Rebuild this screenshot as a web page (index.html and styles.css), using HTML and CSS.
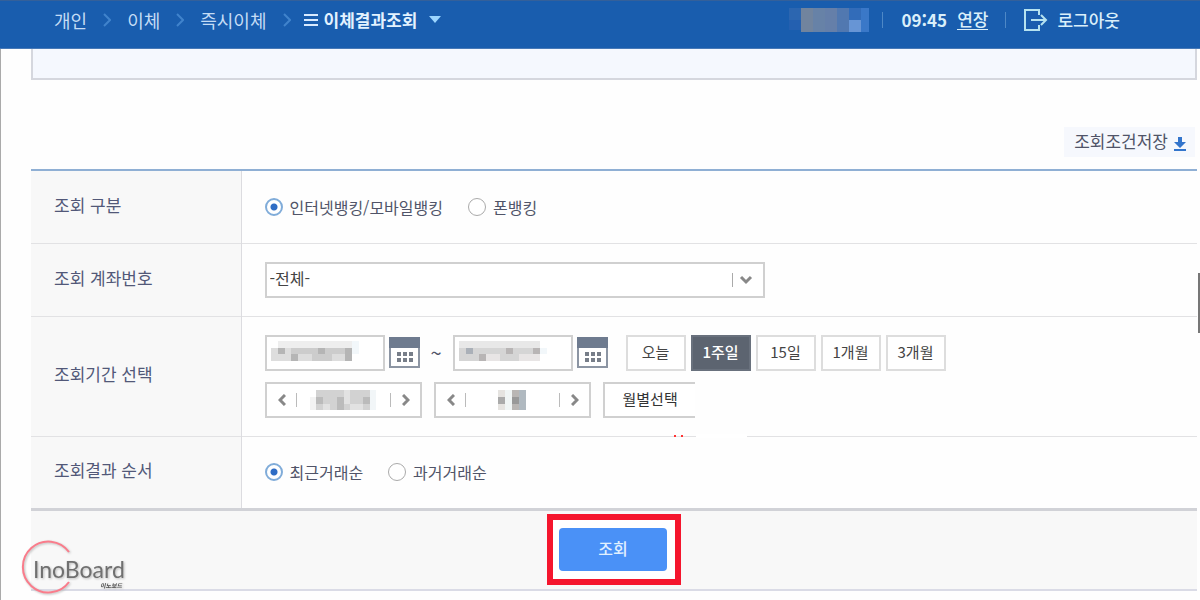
FILE: index.html
```html
<!DOCTYPE html>
<html lang="ko">
<head>
    <meta charset="UTF-8">
    <meta name="viewport" content="width=device-width, initial-scale=1.0">
    <title>이체결과조회</title>
    <link rel="stylesheet" href="styles.css">
</head>
<body>
    <header class="topbar">
        <nav class="breadcrumb">
            <a href="#">개인</a>
            <svg class="sep" width="8" height="14" viewBox="0 0 8 14"><path d="M1 1l6 6-6 6"/></svg>
            <a href="#">이체</a>
            <svg class="sep" width="8" height="14" viewBox="0 0 8 14"><path d="M1 1l6 6-6 6"/></svg>
            <a href="#">즉시이체</a>
            <svg class="sep" width="8" height="14" viewBox="0 0 8 14"><path d="M1 1l6 6-6 6"/></svg>
            <a href="#" class="current">
                <svg width="14" height="14" viewBox="0 0 14 14" fill="#d8eaff"><path d="M0 1h14v2H0zM0 6h14v2H0zM0 11h14v2H0z"/></svg>
                이체결과조회
                <svg class="caret" width="12" height="7" viewBox="0 0 12 7" fill="#9bd5ff"><path d="M0 0h12L6 7z"/></svg>
            </a>
        </nav>
        <div class="session">
            <svg width="80" height="24" viewBox="0 0 80 24">
                <path fill="#2c66b0" d="M0 0h12v12H0z"/><path fill="#2460b0" d="M0 12h12v10H0z"/>
                <path fill="#71849e" d="M12 0h12v24H12z"/><path fill="#6782a7" d="M24 0h12v24H24z"/>
                <path fill="#657fa9" d="M36 0h12v24H36z"/><path fill="#5178b0" d="M48 0h12v24H48z"/>
                <path fill="#326cb9" d="M60 0h12v12H60z"/><path fill="#3a78c8" d="M72 0h8v24h-8z"/>
                <path fill="#6795d5" d="M60 12h12v12H60z"/>
            </svg>
            <span class="bar"></span>
            <span class="time">09:45</span>
            <a href="#" class="extend">연장</a>
            <span class="bar"></span>
            <a href="#" class="logout">
                <svg width="24" height="22" viewBox="0 0 24 22" fill="none" stroke="#b5e2f0" stroke-width="2"><path d="M15 6V1H1v20h14v-5M7 11h15M17 6l5 5-5 5"/></svg>
                로그아웃
            </a>
        </div>
    </header>

    <main class="page">
        <div class="notice"></div>

        <div class="tools">
            <button type="button" class="save">
                조회조건저장
                <svg width="12" height="14" viewBox="0 0 12 14" fill="#3375cc"><path d="M4 0h4v5h4l-6 6-6-6h4zM0 12h12v2H0z"/></svg>
            </button>
        </div>

        <form class="search">
            <table class="conditions">
                <tr>
                    <th scope="row">조회 구분</th>
                    <td>
                        <div class="radios">
                            <label><input type="radio" name="type" checked>인터넷뱅킹/모바일뱅킹</label>
                            <label><input type="radio" name="type">폰뱅킹</label>
                        </div>
                    </td>
                </tr>
                <tr>
                    <th scope="row"><label for="account">조회 계좌번호</label></th>
                    <td>
                        <div class="select-box">
                            <select id="account"><option>-전체-</option></select>
                            <svg width="24" height="16" viewBox="0 0 24 16" fill="none"><path stroke="#aaa" d="M1.500 1v14"/><path stroke="#888" stroke-width="3" d="M10 5l5 5 5-5"/></svg>
                        </div>
                    </td>
                </tr>
                <tr class="period">
                    <th scope="row">조회기간 선택</th>
                    <td>
                        <div class="line">
                            <span class="date">
                                <input type="text" aria-label="시작일">
                                <svg width="88" height="20" viewBox="0 0 88 20">
                                    <path fill="#eee" d="M7 0h74v7H7z"/><path fill="#ddd" d="M0 7h20v13H0z"/>
                                    <path fill="#ccc" d="M20 7h61v13H20z"/><path fill="#b5b5b5" d="M7 7h7v6H7zM20 13h7v7h-7zM74 7h7v13h-7zM47 7h7v6h-7z"/>
                                    <path fill="#ddd" d="M27 13h14v7H27zM61 13h13v7H61z"/><path fill="#f2f7fa" d="M81 0h7v13h-7z"/>
                                </svg>
                            </span>
                            <button type="button" class="calendar" aria-label="시작일 달력">
                                <svg width="31" height="31" viewBox="0 0 31 31"><path fill="#fff" stroke="#8c95a3" stroke-width="2" d="M1 1h29v29H1z"/><path fill="#6e7b8f" d="M0 0h31v11H0z"/><path fill="#777e89" d="M8 15h4v4H8zM14 15h4v4h-4zM20 15h4v4h-4zM8 21h4v4H8zM14 21h4v4h-4zM20 21h4v4h-4z"/></svg>
                            </button>
                            <span class="tilde">~</span>
                            <span class="date">
                                <input type="text" aria-label="종료일">
                                <svg width="88" height="20" viewBox="0 0 88 20">
                                    <path fill="#e8e8e8" d="M0 0h81v7H0z"/><path fill="#d5d5d5" d="M0 7h81v6H0zM0 13h60v7H0z"/>
                                    <path fill="#aab0b8" d="M7 7h7v6H7z"/><path fill="#b8b5b5" d="M20 13h7v7h-7zM47 7h7v6h-7zM74 7h7v6h-7z"/>
                                    <path fill="#e8e5e5" d="M27 13h14v7H27zM60 13h21v7H60z"/><path fill="#f2f7fa" d="M81 7h7v6h-7z"/>
                                </svg>
                            </span>
                            <button type="button" class="calendar" aria-label="종료일 달력">
                                <svg width="31" height="31" viewBox="0 0 31 31"><path fill="#fff" stroke="#8c95a3" stroke-width="2" d="M1 1h29v29H1z"/><path fill="#6e7b8f" d="M0 0h31v11H0z"/><path fill="#777e89" d="M8 15h4v4H8zM14 15h4v4h-4zM20 15h4v4h-4zM8 21h4v4H8zM14 21h4v4h-4zM20 21h4v4h-4z"/></svg>
                            </button>
                            <div class="ranges">
                                <button type="button">오늘</button>
                                <button type="button" class="active">1주일</button>
                                <button type="button">15일</button>
                                <button type="button">1개월</button>
                                <button type="button">3개월</button>
                            </div>
                        </div>
                        <div class="line steppers">
                            <div class="stepper">
                                <button type="button" aria-label="이전 연도"><svg width="8" height="12" viewBox="0 0 8 12"><path d="M7 1L2 6l5 5"/></svg></button>
                                <svg width="66" height="20" viewBox="0 0 66 20">
                                    <path fill="#f3f3f3" d="M0 7h6v13H0z"/><path fill="#d2d2d2" d="M6 0h54v20H6z"/>
                                    <path fill="#bbb" d="M6 7h7v7H6zM27 7h7v13h-7zM53 7h7v7h-7z"/><path fill="#e2e2e2" d="M13 14h7v6h-7zM34 0h6v14h-6zM40 14h13v6H40z"/>
                                    <path fill="#f2f6f8" d="M60 0h6v20h-6z"/>
                                </svg>
                                <button type="button" aria-label="다음 연도"><svg width="8" height="12" viewBox="0 0 8 12"><path d="M1 1l5 5-5 5"/></svg></button>
                            </div>
                            <div class="stepper">
                                <button type="button" aria-label="이전 달"><svg width="8" height="12" viewBox="0 0 8 12"><path d="M7 1L2 6l5 5"/></svg></button>
                                <svg width="28" height="20" viewBox="0 0 28 20">
                                    <path fill="#e5e3e0" d="M0 0h7v20H0z"/><path fill="#aaa" d="M0 7h7v7H0z"/><path fill="#f0f5f5" d="M7 0h7v20H7z"/>
                                    <path fill="#b9b6b4" d="M14 0h7v20h-7z"/><path fill="#b0b9c0" d="M21 0h7v20h-7z"/><path fill="#999" d="M14 7h7v7h-7z"/>
                                </svg>
                                <button type="button" aria-label="다음 달"><svg width="8" height="12" viewBox="0 0 8 12"><path d="M1 1l5 5-5 5"/></svg></button>
                            </div>
                            <button type="button" class="monthly">월별선택</button>
                        </div>
                        <svg class="marks" width="74" height="4" viewBox="0 0 74 4"><path fill="#fff" d="M23 0h51v4H23z"/><path fill="#f33" d="M1 1h2v2H1zM8 1h2v2H8z"/></svg>
                    </td>
                </tr>
                <tr>
                    <th scope="row">조회결과 순서</th>
                    <td>
                        <div class="radios">
                            <label><input type="radio" name="order" checked>최근거래순</label>
                            <label><input type="radio" name="order">과거거래순</label>
                        </div>
                    </td>
                </tr>
            </table>
            <div class="submit">
                <div class="focus-box">
                    <button type="submit">조회</button>
                </div>
            </div>
        </form>
    </main>

    <div class="edge-tab"></div>
    <svg class="logo" width="120" height="60" viewBox="0 0 120 60" role="img" aria-label="InoBoard">
        <path d="M48 13A25.500 25.500 0 1 0 48 43" fill="none" stroke="#fa7c8b" stroke-width="2"/>
        <text class="logo-name" x="12" y="39">InoBoard</text>
        <text class="logo-sub" x="79" y="49">이노보드</text>
    </svg>
</body>
</html>
```
FILE: styles.css
```css
* {
    box-sizing: border-box;
}
body {
    margin: 0;
    position: relative;
    min-height: 100vh;
    background-color: #fefefe;
    color: #505468;
    font-family: "Noto Sans CJK KR", "Noto Sans", sans-serif;
    font-size: 16px;
    line-height: 24px;
}
button, input, select {
    font: inherit;
    color: inherit;
    margin: 0;
}
button {
    padding: 0;
    cursor: pointer;
}
svg {
    display: block;
    flex: none;
}
a {
    color: inherit;
    text-decoration: none;
}

/* 상단 바 */
.topbar {
    display: flex;
    justify-content: space-between;
    height: 49px;
    padding: 6px 80px 16px 54px;
    background-color: #195dae;
    border-top: 1px solid #34609a;
    border-bottom: 1px solid #4779b7;
    color: #c4dcf5;
    font-size: 18px;
    white-space: nowrap;
}
.breadcrumb, .session, .current, .logout {
    display: flex;
    align-items: center;
}
.breadcrumb {
    gap: 16px;
}
.sep {
    fill: none;
    stroke: #4083cc;
    stroke-width: 2;
}
.current {
    gap: 6px;
    margin-left: -3px;
    color: #e3f2ff;
    font-size: 17px;
    font-weight: 700;
}
.caret {
    margin-left: 6px;
}
.session {
    color: #d9effa;
    font-size: 17px;
    font-weight: 500;
}
.time {
    font-weight: 700;
}
.bar {
    width: 1px;
    height: 16px;
    margin: 0 18px 0 13px;
    background-color: #4e88c6;
}
.extend {
    margin-left: 10px;
    line-height: 20px;
    border-bottom: 1px solid #d9effa;
}
.extend + .bar {
    margin-left: 17px;
}
.logout {
    gap: 9px;
}

/* 본문 */
.page {
    min-height: 551px;
    padding: 0 3px 0 30px;
    border-left: 1px solid #aaa;
}
.notice {
    height: 31px;
    background-color: #f5f8fe;
    border: 2px solid #d5d7de;
    border-top: 0;
}
.tools {
    display: flex;
    justify-content: flex-end;
    padding: 47px 2px 12px 0;
}
.save {
    display: flex;
    align-items: center;
    gap: 6px;
    height: 30px;
    padding: 0 9px 2px 10px;
    background-color: #f6f8fd;
    border: 0;
    font-size: 17px;
}
.save svg {
    margin-top: 6px;
}
.conditions {
    width: 100%;
    border-collapse: collapse;
    border-top: 2px solid #8fafd4;
    border-bottom: 3px solid #d1d2d7;
}
.conditions tr {
    height: 73px;
    border-bottom: 1px solid #e2e2e4;
}
.conditions tr.period {
    height: 120px;
}
.conditions th {
    width: 210px;
    padding: 0 0 4px 23px;
    background-color: #f8f8f8;
    border-right: 1px solid #dcdce0;
    color: #525878;
    font-size: 17px;
    font-weight: 400;
    text-align: left;
    white-space: nowrap;
}
.conditions td {
    position: relative;
    padding: 0 0 0 23px;
}
.radios {
    display: flex;
    gap: 25px;
}
.radios label {
    display: flex;
    align-items: center;
    gap: 7px;
}
.radios input {
    appearance: none;
    width: 18px;
    height: 18px;
    background-color: #fff;
    border: 1px solid #aaa;
    border-radius: 50%;
}
.radios input:checked {
    border: 2px solid #80acd9;
    background-image: radial-gradient(circle, #2f6dc5 3px, transparent 4px);
}
.select-box {
    position: relative;
    width: 500px;
    max-width: 100%;
}
.select-box select {
    appearance: none;
    display: block;
    width: 100%;
    height: 36px;
    padding: 0 40px 4px 3px;
    background-color: #fff;
    border: 2px solid #d0d0d0;
    border-radius: 0;
    color: #444;
}
.select-box svg {
    position: absolute;
    top: 10px;
    right: 10px;
    pointer-events: none;
}

/* 조회기간 */
.line {
    display: flex;
    align-items: center;
}
.steppers {
    gap: 12px;
    margin-top: 11px;
}
.date {
    position: relative;
}
.date input {
    display: block;
    width: 120px;
    height: 36px;
    padding: 0 8px;
    background-color: #fff;
    border: 2px solid #d0d0d0;
}
.date svg {
    position: absolute;
    top: 6px;
    left: 6px;
    pointer-events: none;
}
.calendar {
    margin-left: 4px;
    border: 0;
    background: none;
}
.tilde {
    width: 33px;
    font-size: 20px;
    text-align: center;
}
.ranges {
    display: flex;
    gap: 5px;
    margin-left: 18px;
}
.ranges button {
    width: 60px;
    height: 36px;
    padding-bottom: 2px;
    background-color: #fff;
    border: 2px solid #ddd;
    color: #444;
    font-size: 15px;
}
.ranges .active {
    background-color: #5c6470;
    border-color: #69717d;
    color: #fff;
    font-weight: 500;
}
.stepper {
    display: flex;
    align-items: center;
    justify-content: space-between;
    width: 157px;
    height: 36px;
    background-color: #fff;
    border: 2px solid #d0d0d0;
}
.stepper button {
    width: 30px;
    height: 14px;
    padding-left: 11px;
    background: none;
    border: 0;
    border-right: 1px solid #bbb;
}
.stepper button:last-child {
    border-right: 0;
    border-left: 1px solid #bbb;
}
.stepper button svg {
    fill: none;
    stroke: #888;
    stroke-width: 3;
}
.monthly {
    width: 92px;
    height: 36px;
    padding: 0 0 2px 18px;
    background-color: #fff;
    border: 2px solid #d0d0d0;
    border-right: 0;
    color: #333;
    font-size: 15px;
    text-align: left;
}
.marks {
    position: absolute;
    left: 431px;
    bottom: -2px;
}

/* 조회 버튼 */
.submit {
    display: flex;
    justify-content: center;
    padding: 3px 0 4px;
    background-color: #f8f8f8;
    border-bottom: 2px solid #dadbe6;
}
.focus-box {
    padding: 8px 8px 8px 6px;
    background-color: #fff;
    border: 6px solid #f5152d;
}
.focus-box button {
    display: block;
    width: 108px;
    height: 43px;
    padding-bottom: 2px;
    background-color: #4a91f7;
    border: 0;
    border-radius: 4px;
    color: #e0f0ff;
    font-weight: 500;
}

.edge-tab {
    position: absolute;
    top: 273px;
    right: 0;
    width: 2px;
    height: 60px;
    background-color: #777;
}
.logo {
    position: absolute;
    left: 21px;
    top: 539px;
    filter: drop-shadow(1px 1px 1px #bbb);
}
.logo-name {
    font-family: Lato, sans-serif;
    font-size: 23px;
    fill: #707070;
}
.logo-sub {
    font-size: 6px;
    font-style: italic;
    font-weight: 700;
    fill: #555;
}
```
